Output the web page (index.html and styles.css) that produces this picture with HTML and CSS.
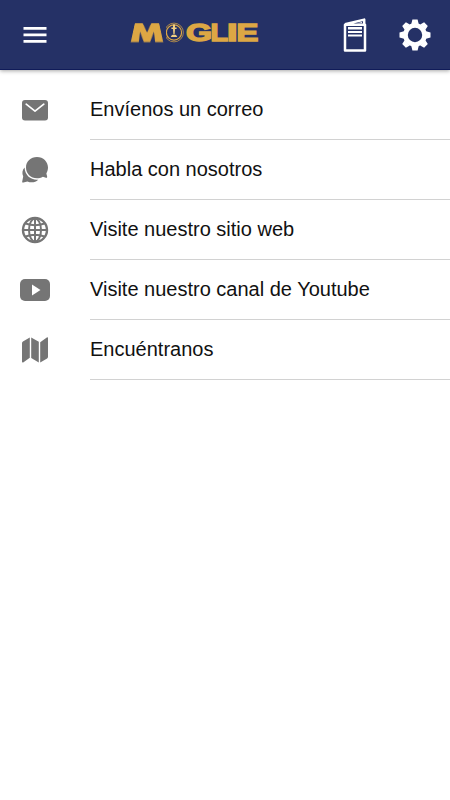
FILE: index.html
```html
<!DOCTYPE html>
<html lang="es">
<head>
<meta charset="utf-8">
<meta name="viewport" content="width=device-width">
<title>Moglie</title>
<link rel="stylesheet" href="styles.css">
</head>
<body>
<header class="toolbar">
  <button class="tool menu" aria-label="Menú"><svg width="30" height="30" viewBox="0 0 30 30"><path d="M3.5 7h23v2.7h-23zM3.5 13.5h23v2.7h-23zM3.5 20h23v2.7h-23z" fill="#fff"/></svg></button>
  <div class="logo" role="img" aria-label="Moglie">
    <svg class="wordmark flared" width="38" height="32" viewBox="0 0 38 32"><text x="1.500" y="25" textLength="35" lengthAdjust="spacingAndGlyphs">M</text></svg>
    <svg class="wordmark" width="96" height="32" viewBox="38 0 96 32">
      <text x="58" y="25" textLength="26" lengthAdjust="spacingAndGlyphs">G</text>
      <text x="82.500" y="25" textLength="17.500" lengthAdjust="spacingAndGlyphs">L</text>
      <text x="99" y="25" textLength="10.500" lengthAdjust="spacingAndGlyphs">I</text>
      <text x="108.500" y="25" textLength="21.800" lengthAdjust="spacingAndGlyphs">E</text>
      <g fill="none" stroke="#dda744">
        <circle cx="46" cy="16.500" r="9.400" stroke-width=".7"/>
        <circle cx="46" cy="16.500" r="7.600" stroke-width="1.200"/>
      </g>
      <path d="M45 8.500h2v3h1.600v1.600H47l-.4 4.800h-1.200L45 13.100h-1.600v-1.600H45zM42.700 21q.8-2.400 3.300-2.400t3.300 2.400z" fill="#f0ce82" stroke="none"/>
    </svg>
  </div>
  <button class="tool catalog" aria-label="Catálogo"><svg width="30" height="40" viewBox="0 0 30 40"><path d="M5 9.800h20v25.700H5zM5 9.300 24.200 4.600v4.900" fill="none" stroke="#fff" stroke-width="2.500" stroke-linejoin="round"/><path d="M17 8.200 22 7v1.200zM8 12h14v2.500H8zM8 16h14v2H8zM8 19.500h14v2H8z" fill="#fff"/></svg></button>
  <button class="tool settings" aria-label="Ajustes"><svg width="34" height="34" viewBox="-17 -17 34 34"><g fill="#fff"><circle r="9.500" fill="none" stroke="#fff" stroke-width="4.600"/><g id="teeth"><path id="pair" d="M-3.700-11-2.600-15.500h5.200L3.700-11zM-3.700 11l1.100 4.500h5.200L3.700 11z"/><use href="#pair" transform="rotate(90)"/></g><use href="#teeth" transform="rotate(45)"/></g></svg></button>
</header>
<main class="contact-list">
  <a class="row"><span class="icon"><svg width="30" height="30" viewBox="0 0 30 30"><rect x="2" y="5" width="26" height="20.500" rx="3" fill="#757575"/><path d="m6.200 9.200 8.800 7 8.800-7" fill="none" stroke="#fff" stroke-width="1.700" stroke-linecap="round" stroke-linejoin="round"/></svg></span><span class="label">Envíenos un correo</span></a>
  <a class="row"><span class="icon"><svg width="30" height="30" viewBox="0 0 30 30"><path d="M17 2c6.300 0 11 4.700 11 10.500 0 2.200-.6 4-1.600 5.700.1 1.600.8 2.600.8 3.900 0 .8-.7.900-1.300.7l-3-1.100C21 22.800 19 23.300 17 23.300 10.700 23.300 6 18.500 6 12.500S10.700 2 17 2z" fill="#757575"/><path d="M4.600 12.500C2.200 15 1.800 18 3.200 21.500L2.200 26.500c-.2.800.4 1.400 1.200 1.100l4-1.200c4 1.700 8 1 10.800-1.700C10.800 25.300 4.900 20.300 4.600 12.500z" fill="#757575"/></svg></span><span class="label">Habla con nosotros</span></a>
  <a class="row"><span class="icon"><svg width="30" height="30" viewBox="0 0 30 30"><circle cx="15" cy="15" r="12" fill="none" stroke="#757575" stroke-width="2.400"/><g fill="none" stroke="#757575" stroke-width="2"><ellipse cx="15" cy="15" rx="6" ry="11.500"/><path d="M15 3v24M3.300 15h23.400M5.500 8.500q9.500 3.400 19 0M5.500 21.500q9.500-3.400 19 0"/></g></svg></span><span class="label">Visite nuestro sitio web</span></a>
  <a class="row"><span class="icon"><svg width="30" height="30" viewBox="0 0 30 30"><rect y="4" width="30" height="22" rx="5" fill="#757575"/><path d="M12 9.500v11l8.500-5.500z" fill="#fff"/></svg></span><span class="label">Visite nuestro canal de Youtube</span></a>
  <a class="row"><span class="icon"><svg width="30" height="30" viewBox="0 0 30 30"><path d="M9.800 2.400v20.300l-6.600 4.700c-.7.500-1.200.1-1.200-.6V8.200q0-1 .9-1.600zM11.200 2.400l7.600 4.300v20.900l-7.600-4.700zM20.200 27.600V7.200l6.600-4.700c.7-.5 1.200-.1 1.200.6v18.700q0 1-.9 1.600z" fill="#757575"/></svg></span><span class="label">Encuéntranos</span></a>
</main>
</body>
</html>
```
FILE: styles.css
```css
* { box-sizing: border-box; }
body {
  margin: 0;
  min-height: 100vh;
  background: #fff;
  color: #111;
  font-family: "Liberation Sans", Arial, sans-serif;
}
.toolbar {
  display: grid;
  grid-template-columns: 70px 1fr 60px 60px 5px;
  align-items: center;
  height: 70px;
  background: #253166;
  border-bottom: 1px solid #101b59;
  box-shadow: 0 1px 4px rgb(0 0 0 / 35%);
}
.tool {
  display: grid;
  place-items: center;
  height: 69px;
  padding: 0;
  border: 0;
  background: none;
}
.tool svg, .logo svg, .icon svg { display: block; }
.logo {
  display: flex;
  margin-left: 58px;
  margin-bottom: 5px;
}
.wordmark {
  flex: none;
  font: bold 24.5px "Liberation Sans", Arial, sans-serif;
  fill: #dda744;
  stroke: #dda744;
  stroke-width: 1.5px;
}
/* Widens the initial towards its baseline. */
.flared {
  transform-origin: 19px 25px;
  transform: matrix3d(1, 0, 0, 0, 0, 1.32, 0, -0.018, 0, 0, 1, 0, 0, 0, 0, 1);
}
.contact-list { padding-top: 10px; }
.row {
  display: grid;
  grid-template-columns: 70px 1fr;
  padding-left: 20px;
  height: 60px;
}
.icon { padding-top: 15px; }
.label {
  border-bottom: 1px solid #d2d2d2;
  font-size: 20px;
  line-height: 58px;
  white-space: nowrap;
}
```
